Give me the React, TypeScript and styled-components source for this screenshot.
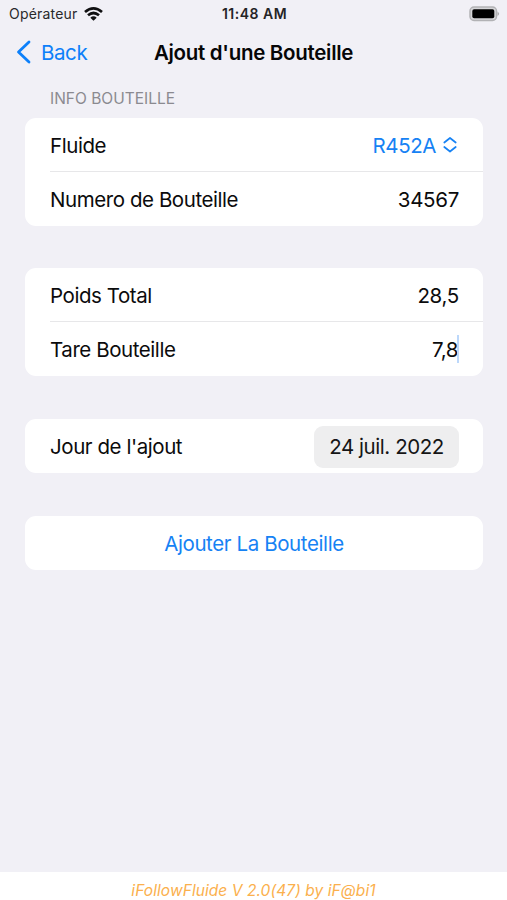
import React from "react";
import styled, { createGlobalStyle } from "styled-components";

const Global = createGlobalStyle`
  * { box-sizing: border-box; }
  body { margin: 0; background: #f1f0f6; font-family: Inter, sans-serif; color: #0b0b0c; }
`;
const Screen = styled.main`
  width: 507px; height: 900px; display: flex; flex-direction: column;
  background: #f1f0f6; overflow: hidden;
`;
const StatusBar = styled.header`
  height: 28px; flex: none; display: grid; grid-template-columns: 1fr auto 1fr;
  align-items: center; padding: 0 7px 1px 9px; font-size: 14px;
`;
const Carrier = styled.div`display: flex; align-items: center; gap: 6px; letter-spacing: 0.2px; color: #29292b;`;
const Clock = styled.time`font-weight: 600; letter-spacing: 0.5px; color: #242426;`;
const Battery = styled.div`display: flex; justify-content: flex-end;`;
const NavBar = styled.nav`
  height: 49px; flex: none; display: grid; grid-template-columns: 1fr auto 1fr;
  align-items: center; padding: 0 16px 1px;
`;
const Back = styled.button`
  display: flex; align-items: center; gap: 9px; padding: 0; border: 0; background: none;
  color: #0d80fa; font: 400 20.5px Inter, sans-serif; letter-spacing: -0.4px;
`;
const Title = styled.h1`margin: 0; font-size: 20.5px; font-weight: 600; letter-spacing: -0.3px; color: #060607;`;
const Form = styled.div`flex: 1; padding: 0 24px 0 25px;`;
const SectionLabel = styled.h2`
  margin: 0; height: 41px; padding: 12px 25px 0; font-size: 15.5px; line-height: 20px;
  font-weight: 400; color: #8b8a90; letter-spacing: 0;
`;
const Card = styled.section`
  background: #fff; border-radius: 11px; margin-bottom: 43px; overflow: hidden;
  &:first-of-type { margin-bottom: 42px; }
`;
const Row = styled.div`
  height: 54px; margin-left: 25px; padding: 1px 24px 0 0; display: flex; align-items: center;
  justify-content: space-between; font-size: 20.5px; letter-spacing: -0.43px;
  &:not(:last-child) { height: 53px; }
  & + & { height: 55px; border-top: 1px solid #e7e7e9; padding-top: 0; }
`;
const Text = styled.span<{ $numeric?: boolean }>`letter-spacing: ${p => p.$numeric ? -0.3 : -0.43}px;`;
const Picker = styled.span`display: flex; align-items: center; gap: 7px; padding-right: 2px; color: #1682f4;`;
const Field = styled.span`display: flex; align-items: center;`;
const Caret = styled.i`width: 2px; height: 28px; margin-left: -1px; background: #bcd8fb;`;
const DatePill = styled.span`
  height: 42px; width: 145px; display: flex; align-items: center; justify-content: center;
  border-radius: 9px; background: #eeeeef; color: #151516;
`;
const Submit = styled.button`
  display: block; width: 100%; height: 54px; padding: 1px 0 0; border: 0; background: none;
  color: #1682f4; font: 400 20.5px Inter, sans-serif; letter-spacing: -0.39px;
`;
const Footer = styled.footer`
  height: 28px; flex: none; background: #fff; color: #fbb04d; display: flex; align-items: center;
  justify-content: center; padding-top: 9px; font-size: 15.5px; font-style: italic; letter-spacing: 0.07px;
`;

const WifiIcon = () => (
  <svg width="19" height="14" viewBox="0 0 19 14" fill="none" stroke="#101011" strokeWidth="2.7">
    <path d="M1 5Q9.5-2.2 18 5M4 8.3Q9.5 3.7 15 8.3" />
    <path d="M6.3 10.7Q9.5 8 12.7 10.7L9.5 13.8Z" fill="#101011" stroke="none" />
  </svg>
);
const BatteryIcon = () => (
  <svg width="31" height="16" viewBox="0 0 31 16">
    <rect x="1" y="1" width="26.5" height="13.5" rx="4" fill="#d5d5d8" stroke="#b2b2b5" strokeWidth="1.5" />
    <rect x="3.3" y="3.3" width="22" height="9" rx="1.8" fill="#000" />
    <path d="M28.5 5.5q3.2 2.3 0 4.6z" fill="#aaaaad" />
  </svg>
);
const BackIcon = () => (
  <svg width="16" height="24" viewBox="0 0 16 24" fill="none" stroke="currentColor" strokeWidth="2.8" strokeLinecap="round" strokeLinejoin="round">
    <path d="M13 2 2.5 12 13 22" />
  </svg>
);
const SelectIcon = () => (
  <svg width="14" height="18" viewBox="0 0 14 18" fill="none" stroke="currentColor" strokeWidth="1.7" strokeLinecap="round" strokeLinejoin="round">
    <path d="M1.3 6.5 7 2l5.7 4.5M1.3 11 7 15.5l5.7-4.5" />
  </svg>
);

export default function App() {
  return (
    <>
      <Global />
      <Screen>
        <StatusBar>
          <Carrier>Opérateur<WifiIcon /></Carrier>
          <Clock>11:48 AM</Clock>
          <Battery><BatteryIcon /></Battery>
        </StatusBar>
        <NavBar>
          <Back><BackIcon />Back</Back>
          <Title>Ajout d'une Bouteille</Title>
        </NavBar>
        <Form>
          <SectionLabel>INFO BOUTEILLE</SectionLabel>
          <Card>
            <Row><Text>Fluide</Text><Picker>R452A<SelectIcon /></Picker></Row>
            <Row><Text>Numero de Bouteille</Text><Text $numeric>34567</Text></Row>
          </Card>
          <Card>
            <Row><Text>Poids Total</Text><Text $numeric>28,5</Text></Row>
            <Row><Text>Tare Bouteille</Text><Field>7,8<Caret /></Field></Row>
          </Card>
          <Card>
            <Row><Text>Jour de l'ajout</Text><DatePill>24 juil. 2022</DatePill></Row>
          </Card>
          <Card><Submit>Ajouter La Bouteille</Submit></Card>
        </Form>
        <Footer>iFollowFluide V 2.0(47) by iF@bi1</Footer>
      </Screen>
    </>
  );
}
